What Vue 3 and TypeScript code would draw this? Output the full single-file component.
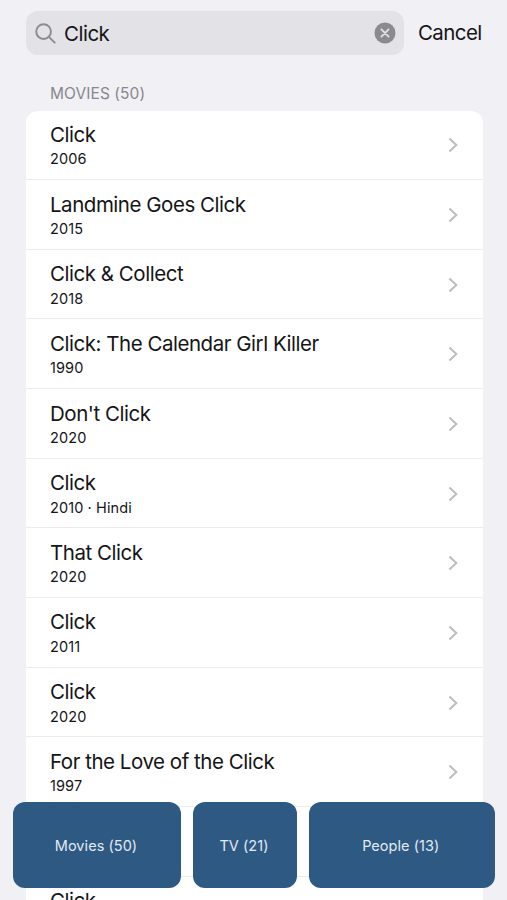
<script setup lang="ts">
import { ref } from 'vue'

interface Movie {
  title: string
  detail: string
}

const query = ref('Click')

const movies: Movie[] = [
  { title: 'Click', detail: '2006' },
  { title: 'Landmine Goes Click', detail: '2015' },
  { title: 'Click & Collect', detail: '2018' },
  { title: 'Click: The Calendar Girl Killer', detail: '1990' },
  { title: "Don't Click", detail: '2020' },
  { title: 'Click', detail: '2010 · Hindi' },
  { title: 'That Click', detail: '2020' },
  { title: 'Click', detail: '2011' },
  { title: 'Click', detail: '2020' },
  { title: 'For the Love of the Click', detail: '1997' },
  { title: '', detail: '' },
  { title: 'Click', detail: '' },
]

const categories = [
  { id: 'movies', label: 'Movies', count: 50 },
  { id: 'tv', label: 'TV', count: 21 },
  { id: 'people', label: 'People', count: 13 },
]
</script>

<template>
  <main class="screen">
    <header class="search-row">
      <label class="search">
        <svg class="search-icon" viewBox="0 0 22 22" aria-hidden="true">
          <circle cx="9" cy="9" r="7.7" />
          <path d="M14.6 14.6 20.6 20.6" />
        </svg>
        <input v-model="query" type="text" class="search-input" />
        <button class="clear" type="button" @click="query = ''">
          <svg viewBox="0 0 22 22" aria-hidden="true">
            <circle cx="11" cy="11" r="10.5" />
            <path d="M7.4 7.4 14.6 14.6M14.6 7.4 7.4 14.6" />
          </svg>
        </button>
      </label>
      <button class="cancel" type="button">Cancel</button>
    </header>

    <h2 class="section-title">MOVIES (50)</h2>

    <ul class="list">
      <li v-for="(movie, i) in movies" :key="i" class="row">
        <div class="texts">
          <div class="title">{{ movie.title }}</div>
          <div class="detail">{{ movie.detail }}</div>
        </div>
        <svg class="chevron" viewBox="0 0 10 16" aria-hidden="true">
          <path d="M1.4 1.4 8.3 8 1.4 14.6" />
        </svg>
      </li>
    </ul>

    <nav class="categories">
      <button v-for="c in categories" :key="c.id" type="button" class="category" :class="c.id">
        {{ c.label }} ({{ c.count }})
      </button>
    </nav>
  </main>
</template>

<style>
body {
  background: #f1f0f5;
  overflow: hidden;
}
</style>

<style scoped>
.screen {
  position: relative;
  box-sizing: border-box;
  height: 900px;
  padding: 11px 24.5px 0 25.5px;
  overflow: hidden;
  background: #f1f0f5;
  color: #151517;
  font-family: Inter, 'Liberation Sans', sans-serif;
}
button {
  padding: 0;
  border: 0;
  background: none;
  font: inherit;
  color: inherit;
}
.search-row {
  display: flex;
  align-items: center;
  gap: 14px;
  height: 43.5px;
}
.search {
  display: flex;
  align-items: center;
  box-sizing: border-box;
  width: 378.5px;
  height: 43.5px;
  padding: 0 8px 0 9px;
  border-radius: 12px;
  background: #e3e2e7;
}
.search-icon {
  flex: none;
  width: 21px;
  height: 21px;
  margin-top: 1px;
  fill: none;
  stroke: #8b8b90;
  stroke-width: 2;
  stroke-linecap: round;
}
.search-input {
  flex: 1;
  min-width: 0;
  height: 30px;
  margin: 2px 0 0 8.5px;
  padding: 0;
  border: 0;
  outline: 0;
  background: none;
  font: 20.5px/30px Inter, 'Liberation Sans', sans-serif;
  letter-spacing: -0.5px;
  color: #151517;
}
.clear {
  display: flex;
}
.clear svg {
  width: 22px;
  height: 22px;
  fill: #8b8a90;
}
.clear path {
  stroke: #e3e2e7;
  stroke-width: 1.8;
  stroke-linecap: round;
}
.cancel {
  font-size: 20.5px;
  line-height: 28px;
  letter-spacing: -0.6px;
}
.section-title {
  margin: 29px 0 0 24.5px;
  font-size: 15.5px;
  font-weight: 400;
  line-height: 20px;
  letter-spacing: 0.08px;
  color: #88878d;
}
.list {
  margin: 7px 0 0;
  padding: 0;
  overflow: hidden;
  border-radius: 12px;
  background: #fff;
  list-style: none;
}
.row {
  display: flex;
  justify-content: space-between;
  box-sizing: border-box;
  height: 69.67px;
  padding: 10.4px 25px 0 24.5px;
  border-bottom: 1px solid #ececef;
}
.title {
  height: 28px;
  font-size: 20.5px;
  line-height: 28px;
  letter-spacing: -0.47px;
  white-space: nowrap;
}
.detail {
  height: 20px;
  padding-top: 0.4px;
  font-size: 14.5px;
  line-height: 20px;
  letter-spacing: 0.1px;
}
.chevron {
  width: 10px;
  height: 16px;
  margin-top: 16.6px;
  fill: none;
  stroke: #bfbfc2;
  stroke-width: 2.1;
}
.categories {
  position: absolute;
  top: 802px;
  left: 13px;
  display: grid;
  grid-template-columns: 168px 104px 185.5px;
  gap: 12px;
  height: 85.5px;
}
.category {
  padding: 1px 2px 0 0;
  border-radius: 12px;
  background: #2d5983;
  color: #e1eaf3;
  font-size: 14.5px;
  letter-spacing: 0.05px;
}
</style>
